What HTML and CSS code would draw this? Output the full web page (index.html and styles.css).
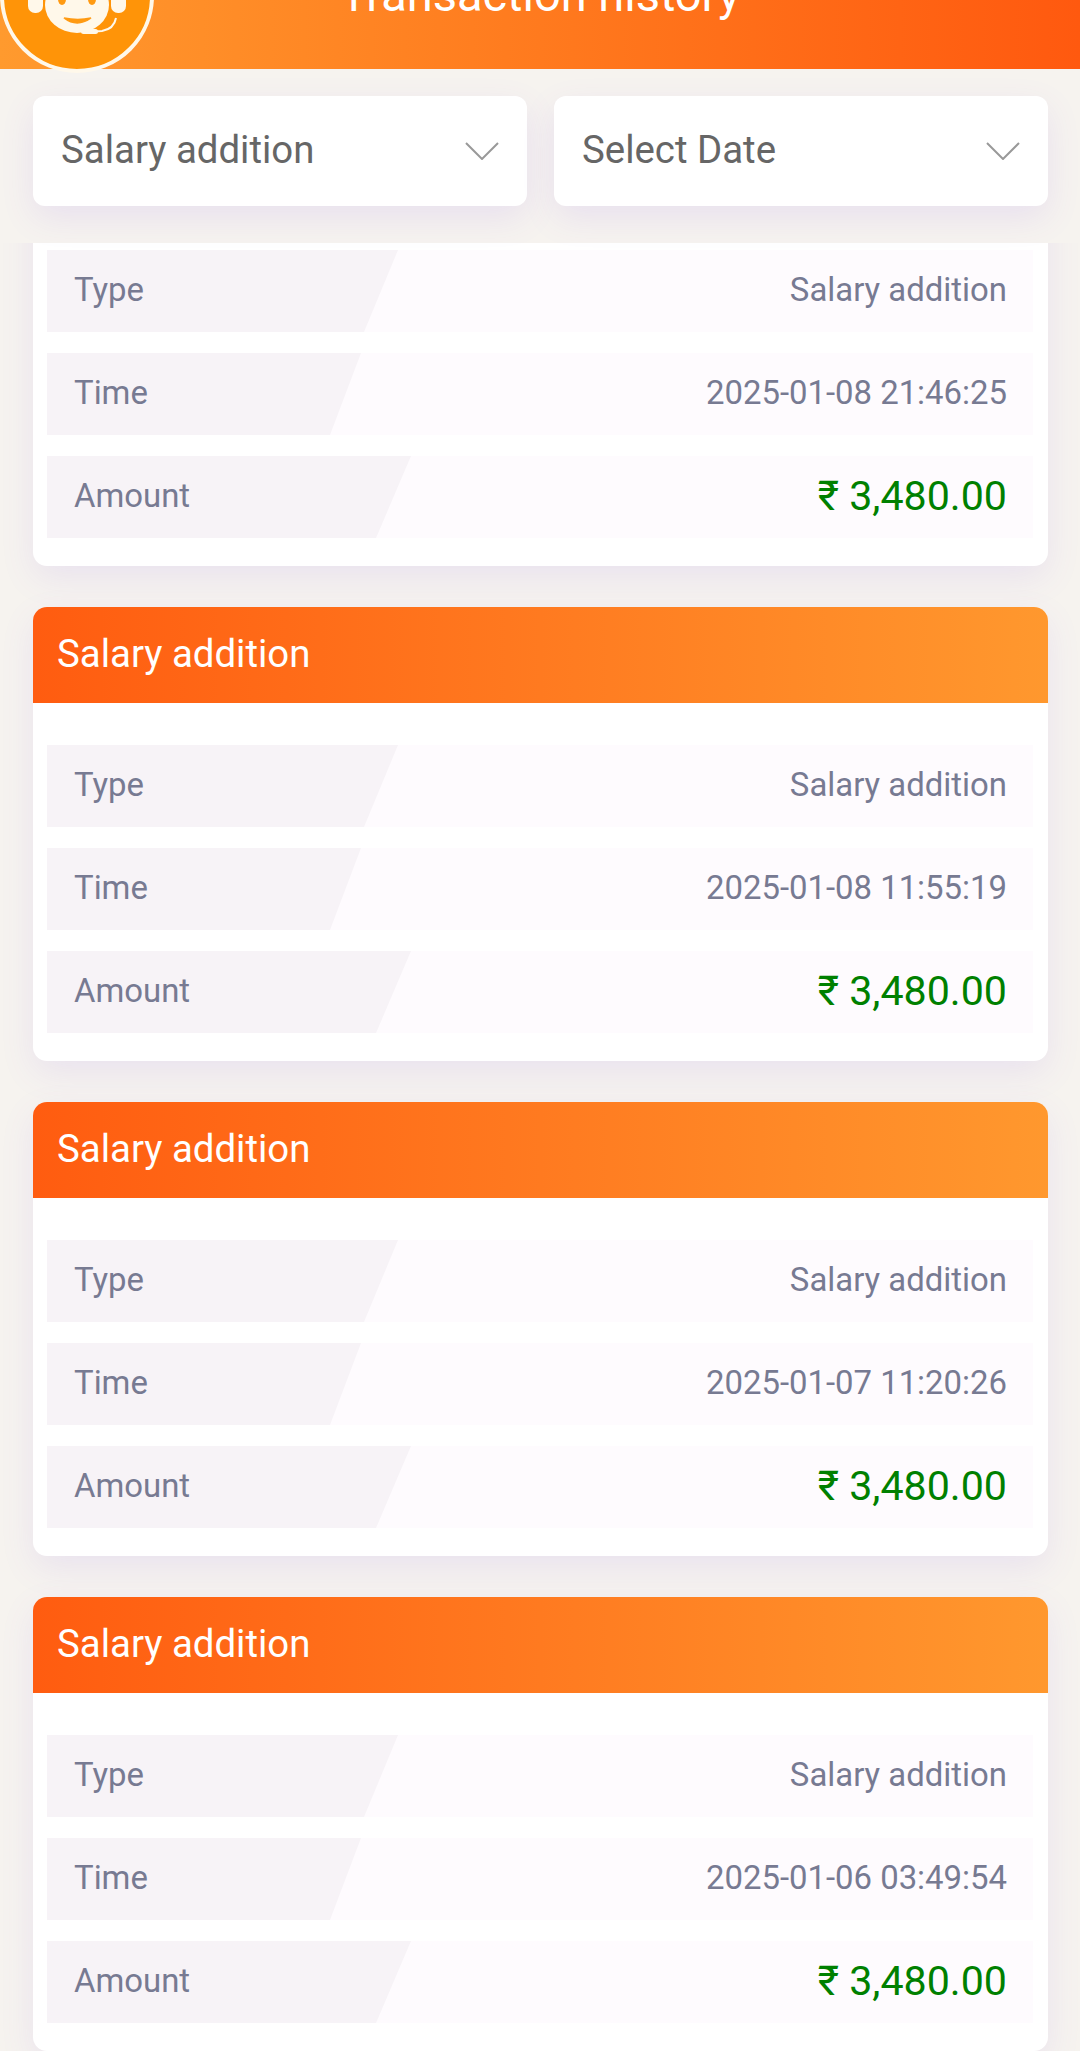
FILE: index.html
```html
<!DOCTYPE html>
<html lang="en">
<head>
  <meta charset="UTF-8">
  <title>Transaction history</title>
  <meta name="viewport" content="width=device-width, initial-scale=1">
  <link rel="stylesheet" href="styles.css">
</head>
<body>

<header class="top-bar">
  <div class="avatar">
    <svg viewBox="0 0 146 146" width="146" height="146" aria-hidden="true">
      <!-- svg y = page y + 77, x = page x - 4 -->
      <g fill="#fff8ea">
        <rect x="24" y="60" width="15" height="30" rx="7"/>
        <rect x="107" y="60" width="15" height="30" rx="7"/>
        <ellipse cx="73" cy="82" rx="32" ry="28"/>
      </g>
      <g fill="#ff9a12">
        <ellipse cx="58" cy="76" rx="4" ry="6"/>
        <ellipse cx="88" cy="76" rx="4" ry="6"/>
      </g>
      <path d="M60 95q13 10 27 0q-13 3-27 0z" fill="#ff9a12" stroke="#ff9a12" stroke-width="1.5"/>
      <path d="M112 95q-2 11-14 13l-16 1" fill="none" stroke="#fff8ea" stroke-width="2"/>
      <rect x="77" y="106" width="17" height="5" rx="2.5" fill="#fff8ea"/>
    </svg>
  </div>
  <h1 class="top-title">Transaction history</h1>
</header>

<div class="filters">
  <div class="filter">
    <span>Salary addition</span>
    <svg class="chevron" viewBox="0 0 34 18" width="34" height="18" aria-hidden="true"><path d="M1 1l16 16L33 1" fill="none" stroke="#999" stroke-width="2"/></svg>
  </div>
  <div class="filter">
    <span>Select Date</span>
    <svg class="chevron" viewBox="0 0 34 18" width="34" height="18" aria-hidden="true"><path d="M1 1l16 16L33 1" fill="none" stroke="#999" stroke-width="2"/></svg>
  </div>
</div>

<main class="list">
  <section class="card card-first">
    <h2 class="card-head">Salary addition</h2>
    <div class="rows">
      <div class="row"><span class="label label-type">Type</span><span class="value">Salary addition</span></div>
      <div class="row"><span class="label label-time">Time</span><span class="value">2025-01-08 21:46:25</span></div>
      <div class="row"><span class="label label-amount">Amount</span><span class="value amount">₹ 3,480.00</span></div>
    </div>
  </section>

  <section class="card">
    <h2 class="card-head">Salary addition</h2>
    <div class="rows">
      <div class="row"><span class="label label-type">Type</span><span class="value">Salary addition</span></div>
      <div class="row"><span class="label label-time">Time</span><span class="value">2025-01-08 11:55:19</span></div>
      <div class="row"><span class="label label-amount">Amount</span><span class="value amount">₹ 3,480.00</span></div>
    </div>
  </section>

  <section class="card">
    <h2 class="card-head">Salary addition</h2>
    <div class="rows">
      <div class="row"><span class="label label-type">Type</span><span class="value">Salary addition</span></div>
      <div class="row"><span class="label label-time">Time</span><span class="value">2025-01-07 11:20:26</span></div>
      <div class="row"><span class="label label-amount">Amount</span><span class="value amount">₹ 3,480.00</span></div>
    </div>
  </section>

  <section class="card">
    <h2 class="card-head">Salary addition</h2>
    <div class="rows">
      <div class="row"><span class="label label-type">Type</span><span class="value">Salary addition</span></div>
      <div class="row"><span class="label label-time">Time</span><span class="value">2025-01-06 03:49:54</span></div>
      <div class="row"><span class="label label-amount">Amount</span><span class="value amount">₹ 3,480.00</span></div>
    </div>
  </section>
</main>

</body>
</html>
```

FILE: styles.css
```css
html,
body {
  height: 2051px;
  overflow: hidden;
}

body {
  margin: 0;
  font-family: Roboto, "Noto Sans", sans-serif;
  background-color: #f6f3ef;
  color: #666;
}

/* Page is scrolled a little, so the bar's text runs off the top */
.top-bar {
  position: relative;
  height: 69px;
  display: flex;
  justify-content: center;
  align-items: flex-end;
  background: linear-gradient(90deg, #ff9a2e 0%, #ff7a1e 50%, #ff590f 100%);
}

.top-title {
  margin: 0 0 54px;
  font-size: 47px;
  font-weight: 400;
  line-height: 40px;
  color: #fff;
  white-space: nowrap;
}

.avatar {
  position: absolute;
  left: 0;
  top: -81px;
  width: 154px;
  height: 154px;
  box-sizing: border-box;
  border: 4px solid #fff8ea;
  border-radius: 50%;
  background-color: #ff9408;
}

.avatar svg {
  display: block;
}

.filters {
  display: flex;
  gap: 27px;
  padding: 27px 32px 37px 33px;
}

.filter {
  flex: 1;
  height: 110px;
  box-sizing: border-box;
  padding: 0 28px 3px;
  display: flex;
  justify-content: space-between;
  align-items: center;
  border-radius: 12px;
  background-color: #fff;
  font-size: 38.4px;
  box-shadow: 0 12px 34px rgba(125, 85, 235, 0.11);
}

.chevron {
  flex: none;
  margin-top: 3px;
}

.list {
  height: 1808px;
  overflow: hidden;
  padding: 0 32px 0 33px;
}

.card {
  margin-bottom: 41px;
  border-radius: 14px;
  background-color: #fff;
  box-shadow: 0 12px 34px rgba(125, 85, 235, 0.1);
}

/* top of the first card is scrolled under the filters */
.card-first {
  margin-top: -131px;
}

.card-head {
  margin: 0;
  height: 96px;
  box-sizing: border-box;
  padding: 0 0 3px 24px;
  display: flex;
  align-items: center;
  border-radius: 14px 14px 0 0;
  background: linear-gradient(90deg, #ff5c10 0%, #ff7a20 50%, #ff982e 100%);
  font-size: 38.4px;
  font-weight: 400;
  color: #fff;
}

.rows {
  display: flex;
  flex-direction: column;
  gap: 21px;
  padding: 42px 15px 28px 14px;
}

.row {
  height: 82px;
  display: flex;
  justify-content: space-between;
  align-items: center;
  background-color: #fefbfe;
  font-size: 32.9px;
  color: #777a92;
}

.label {
  height: 100%;
  box-sizing: border-box;
  padding: 0 0 3px 27px;
  display: flex;
  align-items: center;
  background-color: #f7f3f7;
}

.label-type {
  width: 351px;
  clip-path: polygon(0 0, 100% 0, calc(100% - 34px) 100%, 0 100%);
}

.label-time {
  width: 314px;
  clip-path: polygon(0 0, 100% 0, calc(100% - 31px) 100%, 0 100%);
}

.label-amount {
  width: 364px;
  clip-path: polygon(0 0, 100% 0, calc(100% - 35px) 100%, 0 100%);
}

.value {
  padding: 0 26px 3px 0;
}

.amount {
  font-size: 41.2px;
  color: #008000;
}
```
